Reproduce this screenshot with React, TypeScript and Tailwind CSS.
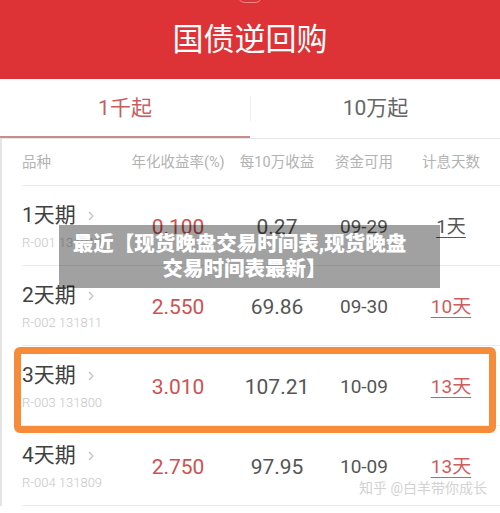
import type {FunctionComponent} from 'react'

type Row = {
  name: string
  code: string
  rate: string
  income: string
  date: string
  days: string
  daysGray?: boolean
}

const rows: Row[] = [
  {name: '1天期', code: 'R-001 131810', rate: '0.100', income: '0.27', date: '09-29', days: '1天', daysGray: true},
  {name: '2天期', code: 'R-002 131811', rate: '2.550', income: '69.86', date: '09-30', days: '10天'},
  {name: '3天期', code: 'R-003 131800', rate: '3.010', income: '107.21', date: '10-09', days: '13天'},
  {name: '4天期', code: 'R-004 131809', rate: '2.750', income: '97.95', date: '10-09', days: '13天'}
]

const cols = 'grid grid-cols-[108px_96px_102px_72px_102px] pl-[20px]'

const Chevron = () => (
  <svg width="10" height="14" viewBox="0 0 10 14" className="ml-[10px] mt-[2px]">
    <polyline points="3,3 7,7 3,11" fill="none" stroke="#c4c4c4" strokeWidth="1.3" />
  </svg>
)

const RepoRow: FunctionComponent<{row: Row; highlight?: boolean; last?: boolean}> = ({row, highlight, last}) => (
  <div className="relative h-[80px]">
    <div className={`${cols} h-full items-center`}>
      <div className="flex flex-col pt-[2px]">
        <div className="flex items-center text-[21px] leading-[26px] text-[#3f3f3f]">
          {row.name}
          <Chevron />
        </div>
        <div className="mt-[5px] text-[13px] leading-[20px] font-light text-[#c6c6c6]">{row.code}</div>
      </div>
      <div className="pt-[3px] text-center text-[21px] text-[#cf5150]">{row.rate}</div>
      <div className="pt-[3px] text-center text-[21px] text-[#555]">{row.income}</div>
      <div className="pt-[3px] text-center text-[19px] text-[#555]">{row.date}</div>
      <div className="pt-[3px] text-center">
        <span
          className={`text-[19px] underline underline-offset-[4px] decoration-1 ${
            row.daysGray ? 'text-[#555]' : 'text-[#cf5c5c]'
          }`}
        >
          {row.days}
        </span>
      </div>
    </div>
    <div className="absolute bottom-0 left-[20px] right-0 h-px bg-[#ececec]" />
    {highlight && (
      <div className="absolute top-[1px] left-[12px] right-[4px] -bottom-[7px] rounded-[6px] border-[7px] border-[#f68b3a]" />
    )}
    {last && (
      <div className="absolute right-[13px] bottom-[7px] text-[14px] text-[#d2d2d2]">知乎 @白羊带你成长</div>
    )}
  </div>
)

export default function App() {
  return (
    <main
      className="relative w-[500px] h-[513px] overflow-hidden bg-white"
      style={{fontFamily: "Roboto, 'Noto Sans CJK SC', sans-serif"}}
    >
      <header className="relative flex h-[79px] items-center justify-center bg-[#dd3236]">
        <div className="absolute -top-[13px] left-[237px] h-[16px] w-[26px] rounded-full border border-white/40" />
        <h1 className="text-[31px] leading-none text-white">国债逆回购</h1>
      </header>

      <nav className="flex h-[60px] border-b border-[#e6e6e6]">
        <div className="relative flex w-[250px] items-center justify-center text-[21px] text-[#c65e5e]">
          1千起
          <div className="absolute bottom-0 left-0 right-0 h-[2px] bg-[#c98b8b]" />
        </div>
        <div className="my-[17px] w-px bg-[#eeeeee]" />
        <div className="flex flex-1 items-center justify-center text-[21px] text-[#666]">10万起</div>
      </nav>

      <section className="border-l-2 border-[#e4e4e4]">
        <div className="relative">
          <div className={`${cols} h-[47px] items-center text-[14.5px] text-[#b3b3b3]`}>
            <div>品种</div>
            <div className="text-center">年化收益率(%)</div>
            <div className="text-center">每10万收益</div>
            <div className="text-center">资金可用</div>
            <div className="text-center">计息天数</div>
          </div>
          <div className="absolute bottom-0 left-[20px] right-0 h-px bg-[#ececec]" />
        </div>
        {rows.map((row, i) => (
          <RepoRow key={row.code} row={row} highlight={i === 2} last={i === 3} />
        ))}
      </section>

      <div className="absolute left-[59px] top-[225px] flex h-[63px] w-[381px] flex-col items-center justify-center bg-[rgba(0,0,0,0.37)] text-[20.5px] font-black leading-[25px] text-white">
        <div className="-ml-[20px]">最近【现货晚盘交易时间表,现货晚盘</div>
        <div className="-ml-[10px]">交易时间表最新】</div>
      </div>
    </main>
  )
}
